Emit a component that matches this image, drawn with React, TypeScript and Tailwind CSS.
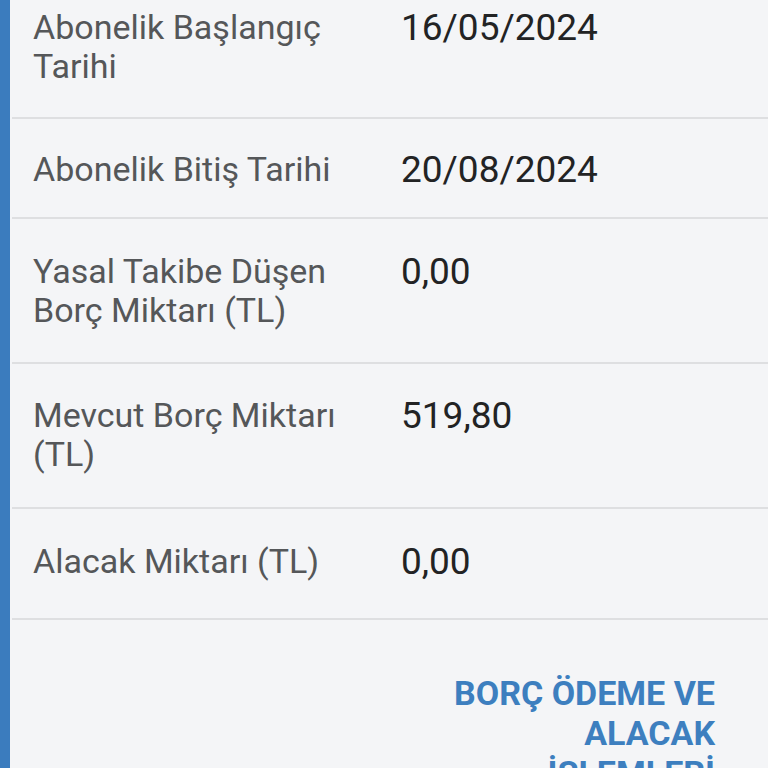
import React from "react";

const rows: { label: string; value: string; cls: string }[] = [
  { label: "Abonelik Başlangıç Tarihi", value: "16/05/2024", cls: "pt-[8px] pb-[31px]" },
  { label: "Abonelik Bitiş Tarihi", value: "20/08/2024", cls: "pt-[31px] pb-[28px]" },
  { label: "Yasal Takibe Düşen Borç Miktarı (TL)", value: "0,00", cls: "pt-[33px] pb-[32px]" },
  { label: "Mevcut Borç Miktarı (TL)", value: "519,80", cls: "pt-[32px] pb-[33px]" },
  { label: "Alacak Miktarı (TL)", value: "0,00", cls: "pt-[33px] pb-[37px]" },
];

export default function App() {
  return (
    <div
      className="flex h-[768px] w-[768px] overflow-hidden bg-[#f4f5f7]"
      style={{ fontFamily: "Roboto, 'Noto Sans', sans-serif" }}
    >
      <div className="w-[10px] shrink-0 bg-[#3b7cbe]" />
      <div className="ml-[2px] flex min-w-0 flex-1 flex-col">
        {rows.map((r, i) => (
          <div key={i} className={`flex border-b-2 border-[#dedfe1] pl-[21px] ${r.cls}`}>
            <div className="w-[368px] shrink-0 pr-[18px] text-[34px] leading-[39px] text-[#555759]">
              {r.label}
            </div>
            <div className="text-[37px] leading-[39px] text-[#222324]">{r.value}</div>
          </div>
        ))}
        <div className="flex justify-end pr-[53px] pt-[53px]">
          <div className="w-[285px] text-right text-[34px] font-bold leading-[40px] text-[#3d7fbf]">
            BORÇ ÖDEME VE ALACAK İŞLEMLERİ
          </div>
        </div>
      </div>
    </div>
  );
}
